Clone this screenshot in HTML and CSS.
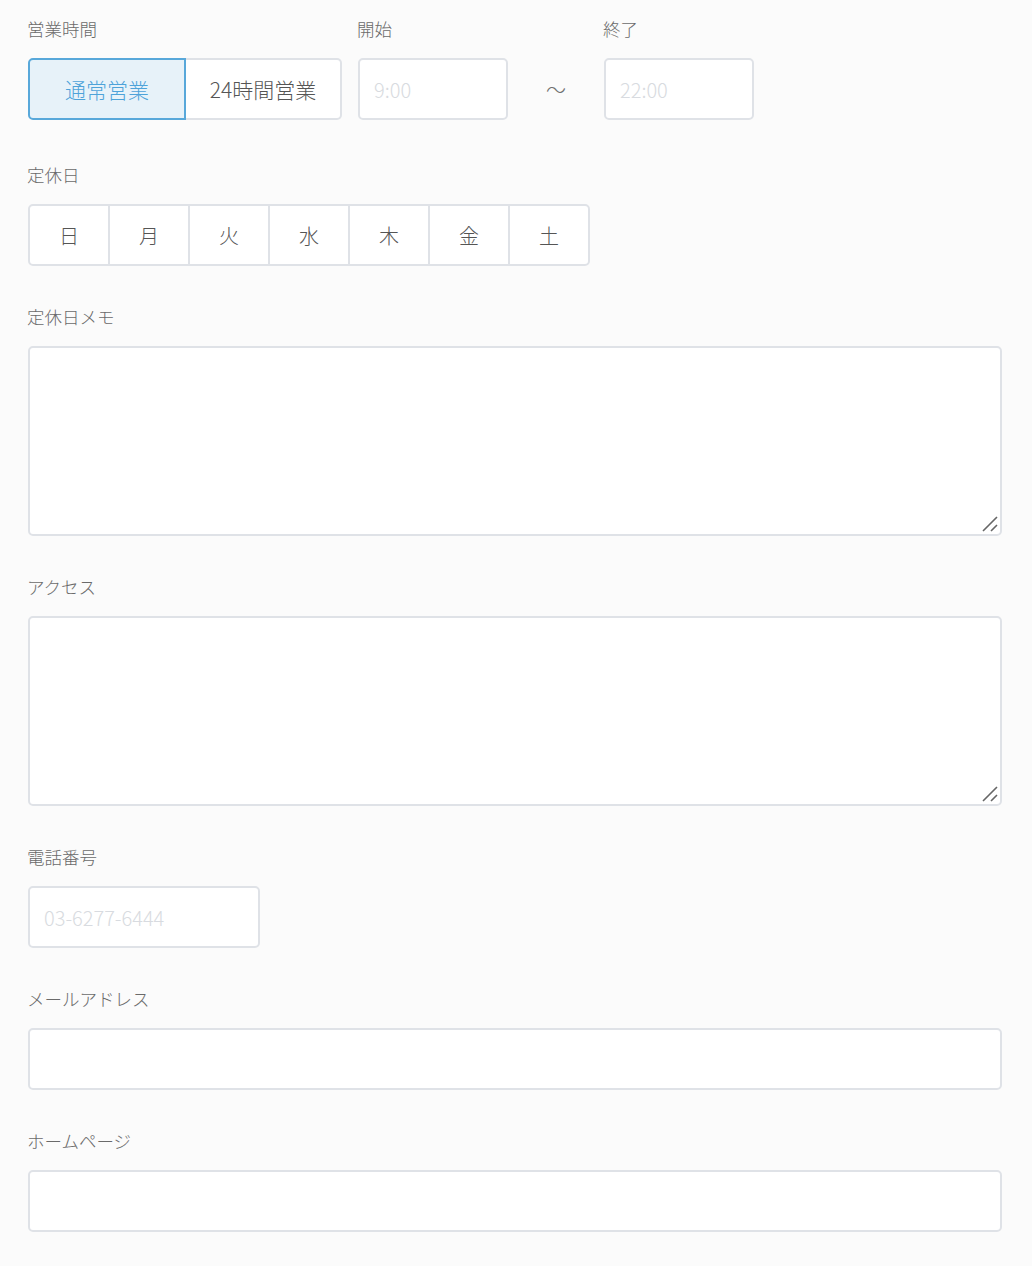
FILE: index.html
```html
<!DOCTYPE html>
<html lang="ja">
<head>
<meta charset="utf-8">
<link rel="stylesheet" href="styles.css">
</head>
<body>
<div class="form">
  <div class="row-hours">
    <div class="field">
      <div class="label">営業時間</div>
      <div class="toggle">
        <button class="tbtn active">通常営業</button>
        <button class="tbtn">24時間営業</button>
      </div>
    </div>
    <div class="field">
      <div class="label">開始</div>
      <input class="input time" placeholder="9:00">
    </div>
    <div class="tilde">〜</div>
    <div class="field">
      <div class="label">終了</div>
      <input class="input time" placeholder="22:00">
    </div>
  </div>

  <div class="field block">
    <div class="label">定休日</div>
    <div class="days">
      <div class="day">日</div>
      <div class="day">月</div>
      <div class="day">火</div>
      <div class="day">水</div>
      <div class="day">木</div>
      <div class="day">金</div>
      <div class="day">土</div>
    </div>
  </div>

  <div class="field block">
    <div class="label">定休日メモ</div>
    <div class="ta-wrap">
      <textarea class="textarea"></textarea>
      <svg class="grip" width="16" height="16" viewBox="0 0 16 16"><path d="M1 15 L15 1 M9 15 L15 9" stroke="#666" stroke-width="1.6" fill="none"/></svg>
    </div>
  </div>

  <div class="field block">
    <div class="label">アクセス</div>
    <div class="ta-wrap">
      <textarea class="textarea"></textarea>
      <svg class="grip" width="16" height="16" viewBox="0 0 16 16"><path d="M1 15 L15 1 M9 15 L15 9" stroke="#666" stroke-width="1.6" fill="none"/></svg>
    </div>
  </div>

  <div class="field block">
    <div class="label">電話番号</div>
    <input class="input tel" placeholder="03-6277-6444">
  </div>

  <div class="field block">
    <div class="label">メールアドレス</div>
    <input class="input wide">
  </div>

  <div class="field block">
    <div class="label">ホームページ</div>
    <input class="input wide">
  </div>
</div>
</body>
</html>
```

FILE: styles.css
```css
* { box-sizing: border-box; }
html, body {
  margin: 0;
  padding: 0;
  background: #fbfbfb;
}
body {
  font-family: "Noto Sans CJK JP", sans-serif;
  color: #555;
}
.form {
  padding: 17px 30px 0 28px;
}
.label {
  font-size: 17.5px;
  line-height: 24px;
  height: 24px;
  color: #6a6a6a;
  font-weight: 300;
  margin-bottom: 17px;
  margin-left: -1px;
}
.row-hours {
  display: flex;
  align-items: flex-start;
  gap: 16px;
  margin-bottom: 42px;
}
.row-hours .tilde {
  width: 64px;
  margin-top: 42px;
  height: 62px;
  line-height: 62px;
  text-align: center;
  font-size: 20px;
  font-weight: 300;
  color: #707070;
}
.toggle {
  display: flex;
  width: 314px;
  height: 62px;
}
.tbtn {
  flex: 1;
  height: 62px;
  font-family: "Noto Sans CJK JP", sans-serif;
  font-size: 21px;
  font-weight: 300;
  color: #555;
  background: #fff;
  border: 2px solid #dfe2e7;
  padding: 0;
}
.tbtn:first-child {
  border-radius: 5px 0 0 5px;
}
.tbtn:last-child {
  border-radius: 0 5px 5px 0;
  border-left: none;
}
.tbtn.active {
  background: #e7f2f9;
  border-color: #58a8da;
  color: #4ea3d9;
}
.input {
  display: block;
  height: 62px;
  border: 2px solid #dfe2e7;
  border-radius: 5px;
  background: #fff;
  font-family: "Noto Sans CJK JP", sans-serif;
  font-size: 20px;
  font-weight: 300;
  color: #555;
  padding: 0 14px;
  outline: none;
}
.input::placeholder {
  color: #d8dbe0;
}
.time { width: 150px; }
.tel { width: 232px; }
.wide { width: 974px; }
.block {
  margin-bottom: 39px;
}
.days {
  display: flex;
  width: 562px;
  height: 62px;
  border: 2px solid #dfe2e7;
  border-radius: 5px;
  background: #fff;
  overflow: hidden;
}
.day {
  flex: 1;
  display: flex;
  align-items: center;
  justify-content: center;
  font-size: 20px;
  font-weight: 300;
  color: #555;
  border-left: 2px solid #dfe2e7;
}
.day:first-child { border-left: none; }
.ta-wrap {
  position: relative;
  width: 974px;
}
.textarea {
  display: block;
  width: 974px;
  height: 190px;
  border: 2px solid #dfe2e7;
  border-radius: 5px;
  background: #fff;
  outline: none;
  resize: none;
  font-family: "Noto Sans CJK JP", sans-serif;
  font-size: 16px;
}
.grip {
  position: absolute;
  right: 4px;
  bottom: 4px;
  pointer-events: none;
}
```
